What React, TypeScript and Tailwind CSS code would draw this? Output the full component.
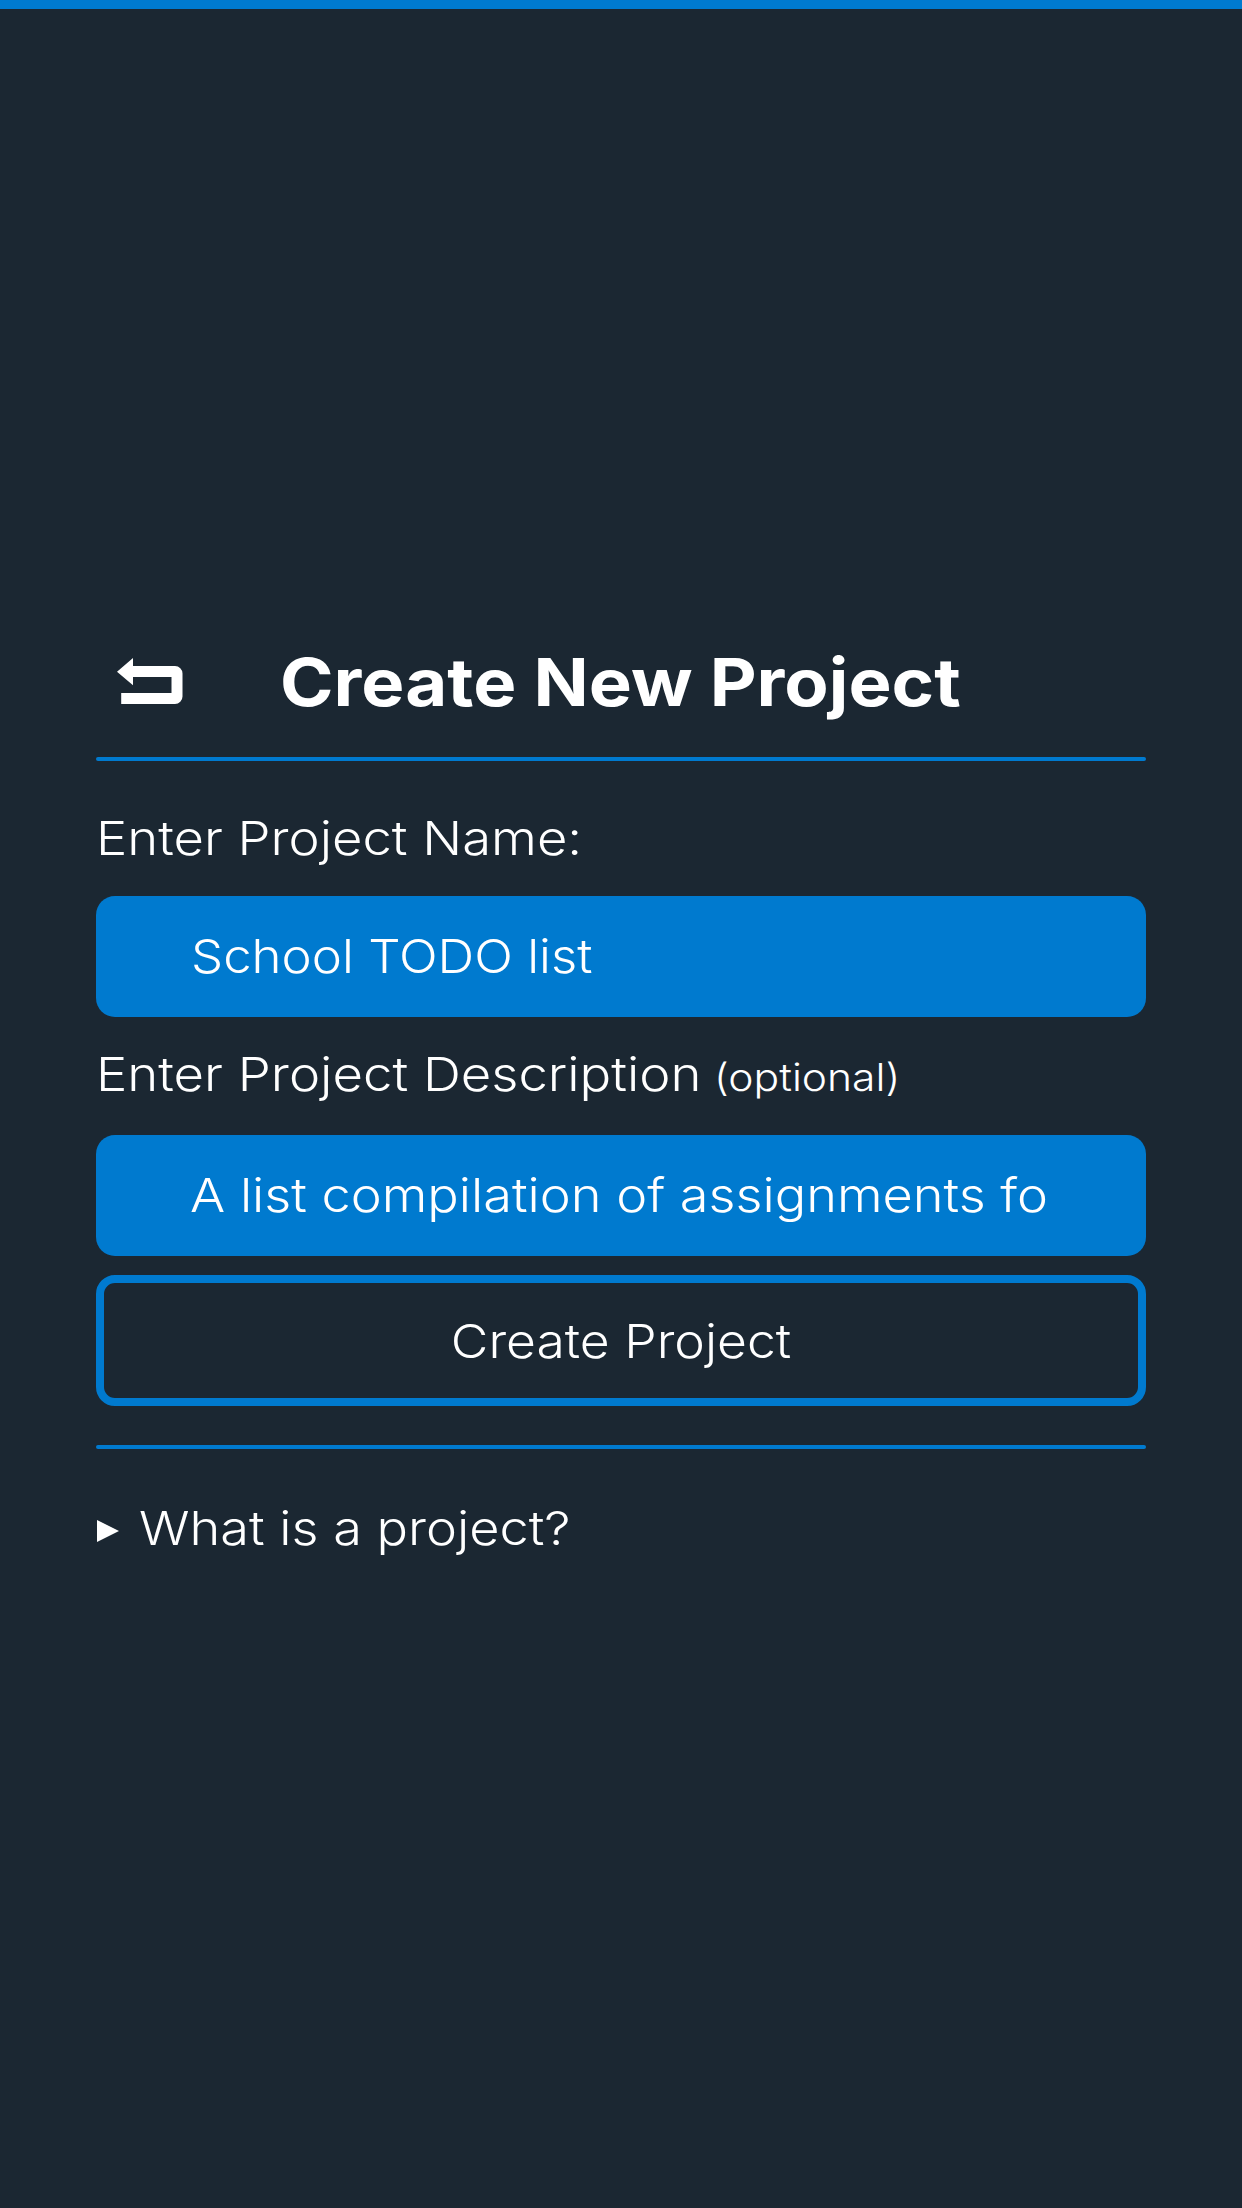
import type { ReactNode } from "react";

function Divider({ className }: { className: string }) {
  return <hr className={`h-[4px] shrink-0 rounded-full border-0 bg-[#007acf] ${className}`} />;
}

function Wide({ children, className }: { children: ReactNode; className: string }) {
  return <span className={`inline-block whitespace-nowrap ${className}`}>{children}</span>;
}

function Field({ children, className }: { children: ReactNode; className: string }) {
  return (
    <div className={`flex h-[121px] shrink-0 items-center overflow-hidden rounded-[19px] bg-[#007acf] pb-[2px] ${className}`}>
      {children}
    </div>
  );
}

function BackIcon() {
  return (
    <svg className="mb-[2px] ml-[21px] h-[46px] w-[66px] shrink-0" viewBox="0 0 66 46" fill="#fff" aria-label="Back">
      <path d="M0 13.7 16 0v8h42a7.5 7.5 0 0 1 7.5 7.5v23A7.5 7.5 0 0 1 58 46H4.2V35h50.3V19H16v8.3z" />
    </svg>
  );
}

export default function App() {
  return (
    <main className="flex h-[2208px] w-[1242px] flex-col border-t-[9px] border-[#007acf] bg-[#1b2732] px-[96px] font-['Inter',sans-serif] text-[47px] leading-[60px] font-light text-white">
      <header className="mt-[633px] flex h-[80px] shrink-0 items-center">
        <BackIcon />
        <h1 className="ml-[97px] text-[66px] leading-[80px] font-bold">
          <Wide className="origin-left scale-x-[1.098]">Create New Project</Wide>
        </h1>
      </header>
      <Divider className="mt-[35px]" />

      <label className="mt-[47px] block h-[60px]">
        <Wide className="origin-left scale-x-[1.118]">Enter Project Name:</Wide>
      </label>
      <Field className="mt-[28px] pl-[95px]">
        <Wide className="origin-left scale-x-[1.083]">School TODO list</Wide>
      </Field>

      <label className="mt-[27px] flex h-[60px] items-baseline">
        <Wide className="w-[618px] origin-left scale-x-[1.12]">Enter Project Description</Wide>
        <small className="text-[38px]">
          <Wide className="origin-left scale-x-[1.12]">(optional)</Wide>
        </small>
      </label>
      <Field className="mt-[31px] pl-[94px]">
        <Wide className="origin-left scale-x-[1.112]">A list compilation of assignments fo</Wide>
      </Field>

      <button className="mt-[19px] flex h-[131px] shrink-0 items-center justify-center rounded-[19px] border-8 border-[#007acf]">
        <Wide className="scale-x-[1.098]">Create Project</Wide>
      </button>
      <Divider className="mt-[39px]" />

      <div className="mt-[49px] flex h-[60px] items-center">
        <svg className="mt-[5px] ml-[1px] h-[22px] w-[22px]" viewBox="0 0 22 22" fill="#fff" aria-hidden="true">
          <path d="M0 0 22 11 0 22z" />
        </svg>
        <Wide className="ml-[20px] origin-left scale-x-[1.112]">What is a project?</Wide>
      </div>
    </main>
  );
}
